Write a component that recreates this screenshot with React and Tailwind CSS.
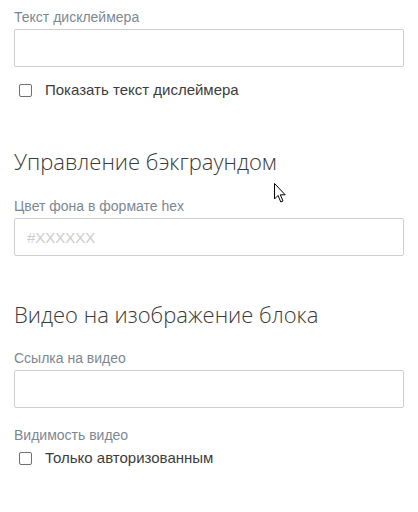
const labelCls = 'block text-[14px] leading-[16px] text-[#7d8793] mb-[4px]'
const inputCls =
  'block w-full h-[38px] border border-[#cfcfcf] rounded-[2px] bg-white px-[12px] text-[15px] text-[#333] placeholder:text-[#cdcdcd] outline-none'
const headCls = 'text-[22px] leading-[28px] font-light text-[#3a3a3a]'

function Field({ label, placeholder }) {
  return (
    <div>
      <label className={labelCls}>{label}</label>
      <input className={inputCls} placeholder={placeholder} />
    </div>
  )
}

function Check({ label }) {
  return (
    <label className="flex items-center gap-[13px] pl-[5px] text-[15px] leading-[20px] text-[#3c3c3c]">
      <span className="w-[13px] h-[13px] border border-[#707070] rounded-[2px] bg-white shrink-0" />
      {label}
    </label>
  )
}

function Cursor() {
  return (
    <svg className="absolute left-[274px] top-[183px]" width="14" height="22" viewBox="0 0 14 22">
      <path d="M0.5 0.5 L0.5 16 L4 12.5 L6.8 19 L9 18 L6.3 11.8 L11.2 11.8 Z" fill="#fff" stroke="#000" strokeWidth="1" strokeLinejoin="round" />
    </svg>
  )
}

export default function App() {
  return (
    <div className="relative w-[418px] h-[512px] bg-white px-[14px] pt-[9px]" style={{ fontFamily: '"Liberation Sans", Arial, sans-serif' }}>
      <Field label="Текст дисклеймера" />
      <div className="mt-[13px]">
        <Check label="Показать текст дислеймера" />
      </div>

      <h2 className={`mt-[47px] ${headCls}`} style={{ fontFamily: '"Open Sans", sans-serif' }}>
        Управление бэкграундом
      </h2>
      <div className="mt-[23px]">
        <Field label="Цвет фона в формате hex" placeholder="#XXXXXX" />
      </div>

      <h2 className={`mt-[44px] ${headCls}`} style={{ fontFamily: '"Open Sans", sans-serif' }}>
        Видео на изображение блока
      </h2>
      <div className="mt-[22px]">
        <Field label="Ссылка на видео" />
      </div>
      <div className="mt-[19px]">
        <label className={labelCls}>Видимость видео</label>
        <div className="mt-[5px]">
          <Check label="Только авторизованным" />
        </div>
      </div>

      <Cursor />
    </div>
  )
}
